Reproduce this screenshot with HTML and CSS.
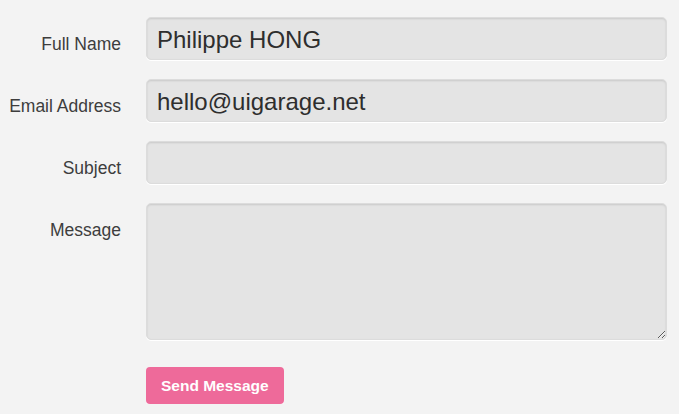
FILE: index.html
```html
<!DOCTYPE html>
<html>
<head>
<meta charset="utf-8">
<link rel="stylesheet" href="styles.css">
</head>
<body>
<form class="contact">
  <div class="row">
    <label class="label" for="name">Full Name</label>
    <input class="field" id="name" type="text" value="Philippe HONG">
  </div>
  <div class="row">
    <label class="label" for="email">Email Address</label>
    <input class="field" id="email" type="text" value="hello@uigarage.net">
  </div>
  <div class="row">
    <label class="label" for="subject">Subject</label>
    <input class="field" id="subject" type="text" value="">
  </div>
  <div class="row">
    <label class="label" for="message">Message</label>
    <textarea class="field area" id="message"></textarea>
  </div>
  <div class="row actions">
    <span></span>
    <button class="send" type="button">Send Message</button>
  </div>
</form>
</body>
</html>
```
FILE: styles.css
```css
html, body {
  margin: 0;
  padding: 0;
  background: #f3f3f3;
}
.contact {
  display: flex;
  flex-direction: column;
  gap: 19px;
  padding-top: 17px;
  font-family: "Liberation Sans", Arial, sans-serif;
}
.row {
  display: grid;
  grid-template-columns: 121px 521px;
  column-gap: 25px;
  align-items: start;
}
.label {
  text-align: right;
  font-size: 17.5px;
  line-height: 20px;
  color: #3d3d3d;
  padding-top: 17px;
}
.field {
  box-sizing: border-box;
  height: 43px;
  margin: 0;
  padding: 3px 10px 0;
  border: 1px solid #dcdcdc;
  border-radius: 5px;
  background: #e4e4e4;
  box-shadow: inset 0 1px 2px rgba(0,0,0,0.12), 0 1px 0 #ffffff;
  font-family: "Liberation Sans", Arial, sans-serif;
  font-size: 24px;
  color: #2e2e2e;
  outline: none;
}
.area {
  height: 137px;
  resize: both;
  padding-top: 8px;
}
.contact > .row.actions {
  margin-top: 8px;
}
.send {
  justify-self: start;
  height: 37px;
  padding: 0 15px;
  border: none;
  border-radius: 4px;
  background: #ee6a9a;
  color: #ffffff;
  font-family: "Liberation Sans", Arial, sans-serif;
  font-weight: bold;
  font-size: 15.5px;
  box-shadow: 0 1px 0 #ffffff;
}
```
